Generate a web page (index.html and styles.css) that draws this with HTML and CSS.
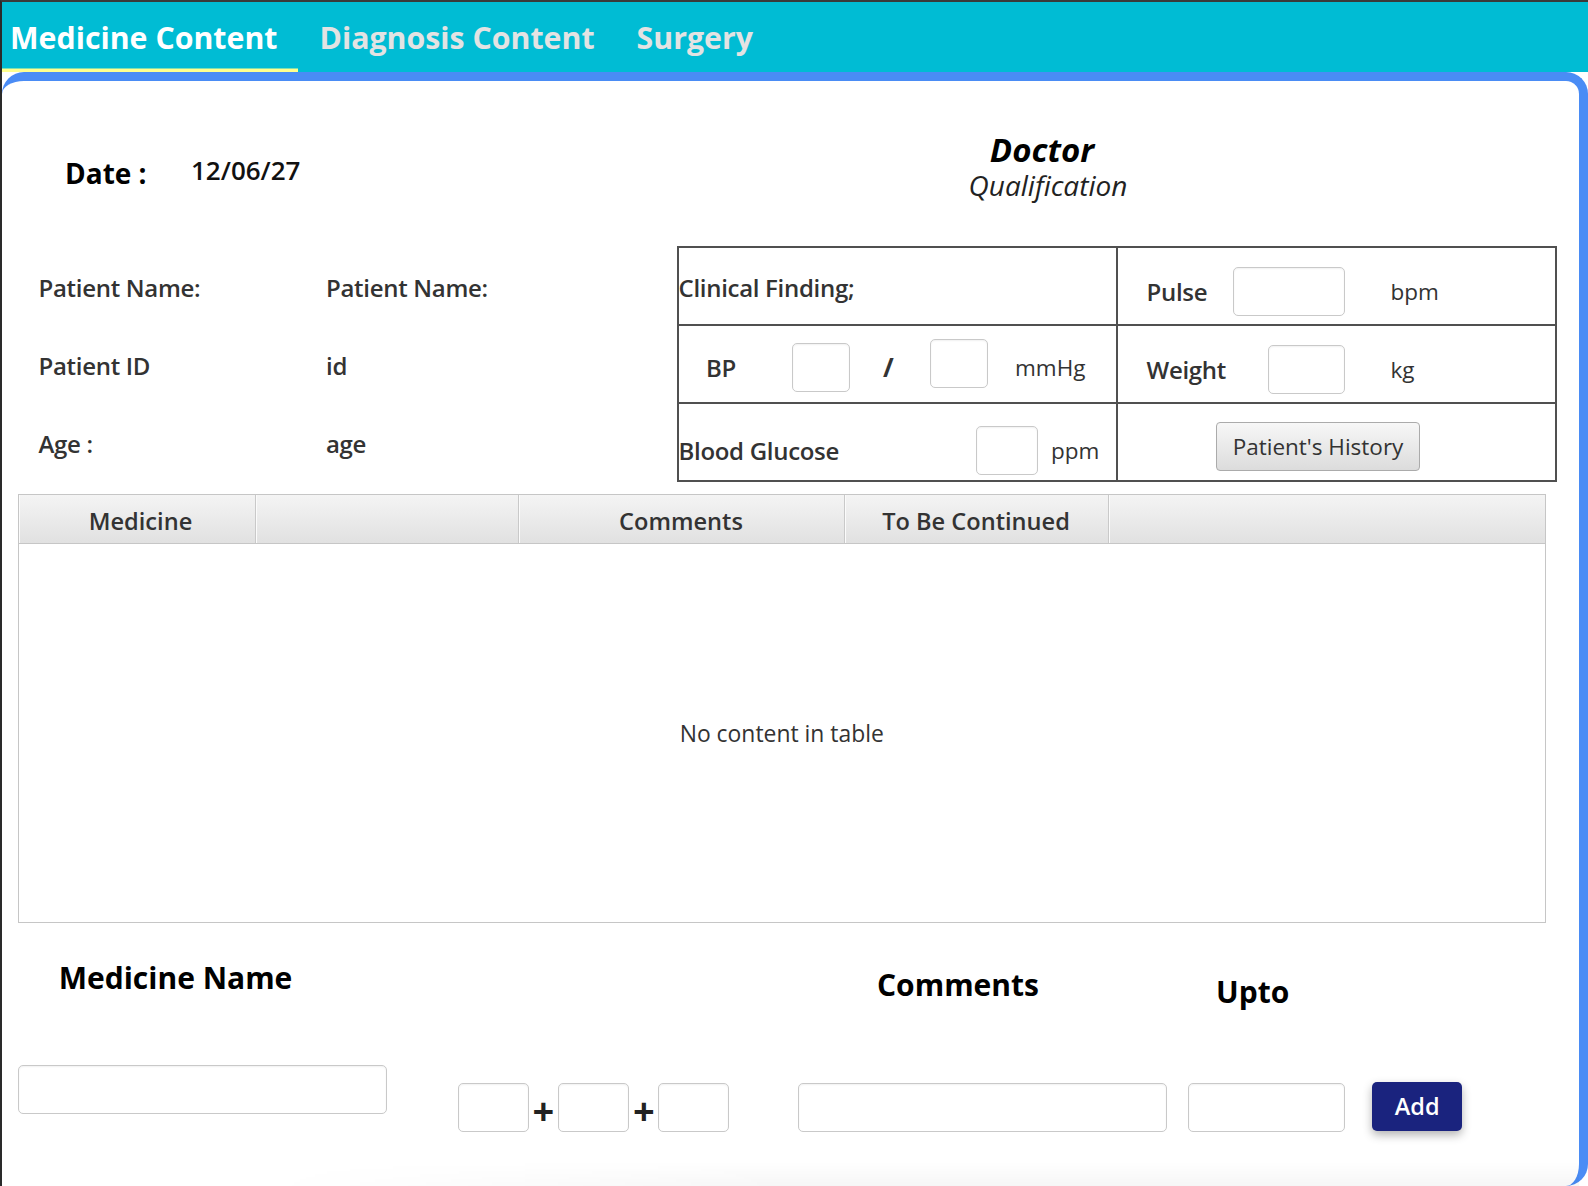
FILE: index.html
```html
<!DOCTYPE html>
<html lang="en">
<head>
<meta charset="utf-8">
<title>Medicine Content</title>
<link rel="stylesheet" href="styles.css">
</head>
<body>
<div class="app">
  <nav class="tabs">
    <div class="tab active">Medicine Content</div>
    <div class="tab">Diagnosis Content</div>
    <div class="tab">Surgery</div>
  </nav>
  <main class="card">
    <section class="top">
      <div class="date">
        <span class="date-label">Date :</span>
        <span class="date-value">12/06/27</span>
      </div>
      <div class="doctor">
        <div class="doc-name">Doctor</div>
        <div class="doc-qual">Qualification</div>
      </div>
    </section>

    <section class="info">
      <div class="patient">
        <div class="prow"><span class="pkey">Patient Name:</span><span class="pval">Patient Name:</span></div>
        <div class="prow"><span class="pkey">Patient ID</span><span class="pval">id</span></div>
        <div class="prow"><span class="pkey">Age :</span><span class="pval">age</span></div>
      </div>
      <div class="clinical">
        <div class="cell c-find"><span>Clinical Finding;</span></div>
        <div class="cell c-pulse">
          <span class="lbl-pulse">Pulse</span>
          <input class="field w-pulse" type="text">
          <span class="unit u-bpm">bpm</span>
        </div>
        <div class="cell c-bp">
          <span class="lbl-bp">BP</span>
          <input class="field w-bp" type="text">
          <span class="slash">/</span>
          <input class="field w-bp bp2" type="text">
          <span class="unit u-mmhg">mmHg</span>
        </div>
        <div class="cell c-weight">
          <span class="lbl-weight">Weight</span>
          <input class="field w-weight" type="text">
          <span class="unit u-kg">kg</span>
        </div>
        <div class="cell c-glucose">
          <span class="lbl-glucose">Blood Glucose</span>
          <input class="field w-glucose" type="text">
          <span class="unit u-ppm">ppm</span>
        </div>
        <div class="cell c-history">
          <button class="history" type="button">Patient's History</button>
        </div>
      </div>
    </section>

    <section class="grid-table">
      <div class="thead">
        <div class="th">Medicine</div>
        <div class="th"></div>
        <div class="th">Comments</div>
        <div class="th">To Be Continued</div>
        <div class="th last"></div>
      </div>
      <div class="tbody">No content in table</div>
    </section>

    <section class="entry">
      <div class="entry-labels">
        <span class="el-med">Medicine Name</span>
        <span class="el-com">Comments</span>
        <span class="el-upto">Upto</span>
      </div>
      <div class="entry-fields">
        <input class="field f-med" type="text">
        <div class="smalls">
          <input class="field f-small" type="text">
          <span class="plus">+</span>
          <input class="field f-small" type="text">
          <span class="plus">+</span>
          <input class="field f-small" type="text">
        </div>
        <input class="field f-com" type="text">
        <input class="field f-upto" type="text">
        <button class="add" type="button">Add</button>
      </div>
    </section>
  </main>
</div>
</body>
</html>
```

FILE: styles.css
```css
* { box-sizing: border-box; }
html, body { margin: 0; padding: 0; }
body {
  width: 1588px;
  height: 1186px;
  overflow: hidden;
  background: #fff;
  font-family: "Open Sans", "Noto Sans", sans-serif;
  color: #333;
}

.app {
  height: 1186px;
  border-top: 2px solid #3a3a3a;
  border-left: 2px solid #2a2a2a;
  display: flex;
  flex-direction: column;
  background: #fff;
}

/* Tabs */
.tabs {
  flex: none;
  height: 70px;
  background: #00bcd4;
  display: flex;
}
.tab {
  height: 70px;
  padding: 0 21px;
  display: flex;
  align-items: center;
  font-weight: 700;
  font-size: 30.3px;
  color: #e3e3e3;
  white-space: nowrap;
}
.tab.active {
  color: #fff;
  padding-left: 8px;
  box-shadow: inset 0 -3.5px 0 #ffff8d;
}

/* Card */
.card {
  flex: none;
  height: 1114px;
  border: 9px solid #4a8cf5;
  border-left: 0;
  border-bottom: 0;
  border-radius: 22px;
  padding-left: 16px;
  display: flex;
  flex-direction: column;
  position: relative;
  background: #fff;
}
.card::after {
  content: "";
  position: absolute;
  left: 260px;
  right: 0;
  bottom: 0;
  height: 24px;
  background: linear-gradient(rgba(0,0,0,0), rgba(0,0,0,0.035));
  -webkit-mask-image: linear-gradient(to right, transparent, #000 40%);
  mask-image: linear-gradient(to right, transparent, #000 40%);
  pointer-events: none;
}

/* Top */
.top {
  flex: none;
  height: 165px;
  display: flex;
  align-items: flex-start;
}
.date {
  width: 874px;
  padding-left: 47px;
  display: flex;
  align-items: flex-start;
}
.date-label {
  width: 126px;
  margin-top: 72px;
  line-height: 40px;
  font-size: 28px;
  font-weight: 700;
  color: #000;
}
.date-value {
  margin-top: 69px;
  line-height: 40px;
  font-size: 26px;
  font-weight: 600;
  color: #111;
}
.doctor {
  width: 300px;
  padding-top: 51px;
  text-align: center;
  color: #000;
}
.doc-name {
  line-height: 36px;
  font-size: 33px;
  font-weight: 700;
  font-style: italic;
}
.doc-qual {
  line-height: 34px;
  font-size: 28px;
  font-style: italic;
  color: #222;
  padding-left: 12px;
}

/* Info */
.info {
  flex: none;
  height: 236px;
  display: flex;
}
.patient {
  width: 658.5px;
  padding-left: 20.5px;
  padding-top: 2px;
}
.prow {
  height: 78px;
  display: flex;
  align-items: center;
  font-size: 24px;
  font-weight: 600;
  letter-spacing: -0.3px;
  color: #333;
}
.pkey { width: 287.5px; }

.clinical {
  width: 880px;
  height: 236px;
  display: grid;
  grid-template-columns: 1fr 1fr;
  grid-template-rows: 76px 76px 76px;
  gap: 2px;
  padding: 2px;
  background: #505050;
}
.cell {
  background: #fff;
  display: flex;
  align-items: center;
  font-size: 24px;
  font-weight: 600;
  letter-spacing: -0.3px;
  color: #333;
  white-space: nowrap;
}
.unit {
  font-size: 22.5px;
  font-weight: 400;
  letter-spacing: 0;
  color: #333;
}

.field {
  display: block;
  height: 49px;
  margin: 0;
  padding: 0;
  border: 1px solid #c9c9c9;
  border-radius: 5px;
  background: #fff;
  box-shadow: inset 0 1px 2px rgba(0,0,0,0.06);
  font: inherit;
  outline: none;
}

.c-find { padding-top: 3px; }

.c-pulse { padding-left: 29px; padding-top: 10px; }
.lbl-pulse { width: 86px; }
.w-pulse { width: 112px; }
.u-bpm { margin-left: 46px; }

.c-bp { padding-left: 27.5px; padding-top: 6px; }
.lbl-bp { width: 86px; }
.w-bp { width: 58px; }
.bp2 { margin-bottom: 7px; }
.slash {
  width: 80px;
  padding-left: 33px;
  font-size: 26px;
  font-weight: 700;
}
.u-mmhg { margin-left: 27px; }

.c-weight { padding-left: 29px; padding-top: 10px; }
.lbl-weight { width: 121.5px; }
.w-weight { width: 77px; }
.u-kg { margin-left: 45.5px; }

.c-glucose { padding-top: 16px; }
.lbl-glucose { width: 297.5px; }
.w-glucose { width: 62px; }
.u-ppm { margin-left: 13px; }

.c-history { padding-left: 98.5px; padding-top: 9px; }
.history {
  width: 204px;
  height: 49px;
  margin: 0;
  padding: 0;
  border: 1px solid #ababab;
  border-radius: 4px;
  background: linear-gradient(#f7f7f7, #dcdcdc);
  font-family: inherit;
  font-size: 22.5px;
  font-weight: 400;
  color: #333;
  letter-spacing: 0;
}

/* Table */
.grid-table {
  flex: none;
  margin-top: 12px;
  width: 1527.5px;
  height: 429px;
  border: 1px solid #c6c6c6;
  display: flex;
  flex-direction: column;
}
.thead {
  flex: none;
  height: 49px;
  display: grid;
  grid-template-columns: 237px 262.5px 326px 264px 1fr;
  background: linear-gradient(#f4f4f4, #e1e1e1);
  border-bottom: 1px solid #c6c6c6;
}
.th {
  border-right: 1px solid #c9c9c9;
  box-shadow: inset 1px 0 0 #fbfbfb;
  display: flex;
  align-items: center;
  justify-content: center;
  padding-top: 3px;
  font-size: 23.6px;
  font-weight: 600;
  color: #333;
  white-space: nowrap;
}
.th:first-child { padding-left: 7px; }
.th.last { border-right: 0; }
.tbody {
  flex: 1;
  display: flex;
  align-items: center;
  justify-content: center;
  font-size: 22.9px;
  color: #333;
}

/* Entry */
.entry { flex: none; }
.entry-labels {
  height: 141.5px;
  display: flex;
  align-items: flex-start;
  font-size: 30px;
  font-weight: 700;
  color: #000;
  line-height: 40px;
  white-space: nowrap;
}
.el-med { width: 859px; padding-left: 40.7px; margin-top: 35.4px; }
.el-com { width: 339px; margin-top: 41.5px; }
.el-upto { margin-top: 48.5px; }

.entry-fields {
  display: flex;
  align-items: flex-start;
}
.f-med { width: 369px; }
.smalls {
  margin-left: 70.8px;
  margin-top: 18.2px;
  display: flex;
}
.f-small { width: 71px; }
.plus {
  width: 29.3px;
  height: 49px;
  padding-top: 6px;
  display: flex;
  align-items: center;
  justify-content: center;
  font-size: 38px;
  font-weight: 700;
  color: #222;
}
.f-com { width: 369px; margin-left: 69px; margin-top: 18.2px; }
.f-upto { width: 157px; margin-left: 21px; margin-top: 18.2px; }
.add {
  width: 89.5px;
  height: 49px;
  margin: 17.2px 0 0 27px;
  padding: 0;
  border: 0;
  border-radius: 5px;
  background: #1a237e;
  color: #fff;
  font-family: inherit;
  font-size: 23.5px;
  font-weight: 600;
  box-shadow: 0 4px 10px rgba(0,0,0,0.3);
}
```
